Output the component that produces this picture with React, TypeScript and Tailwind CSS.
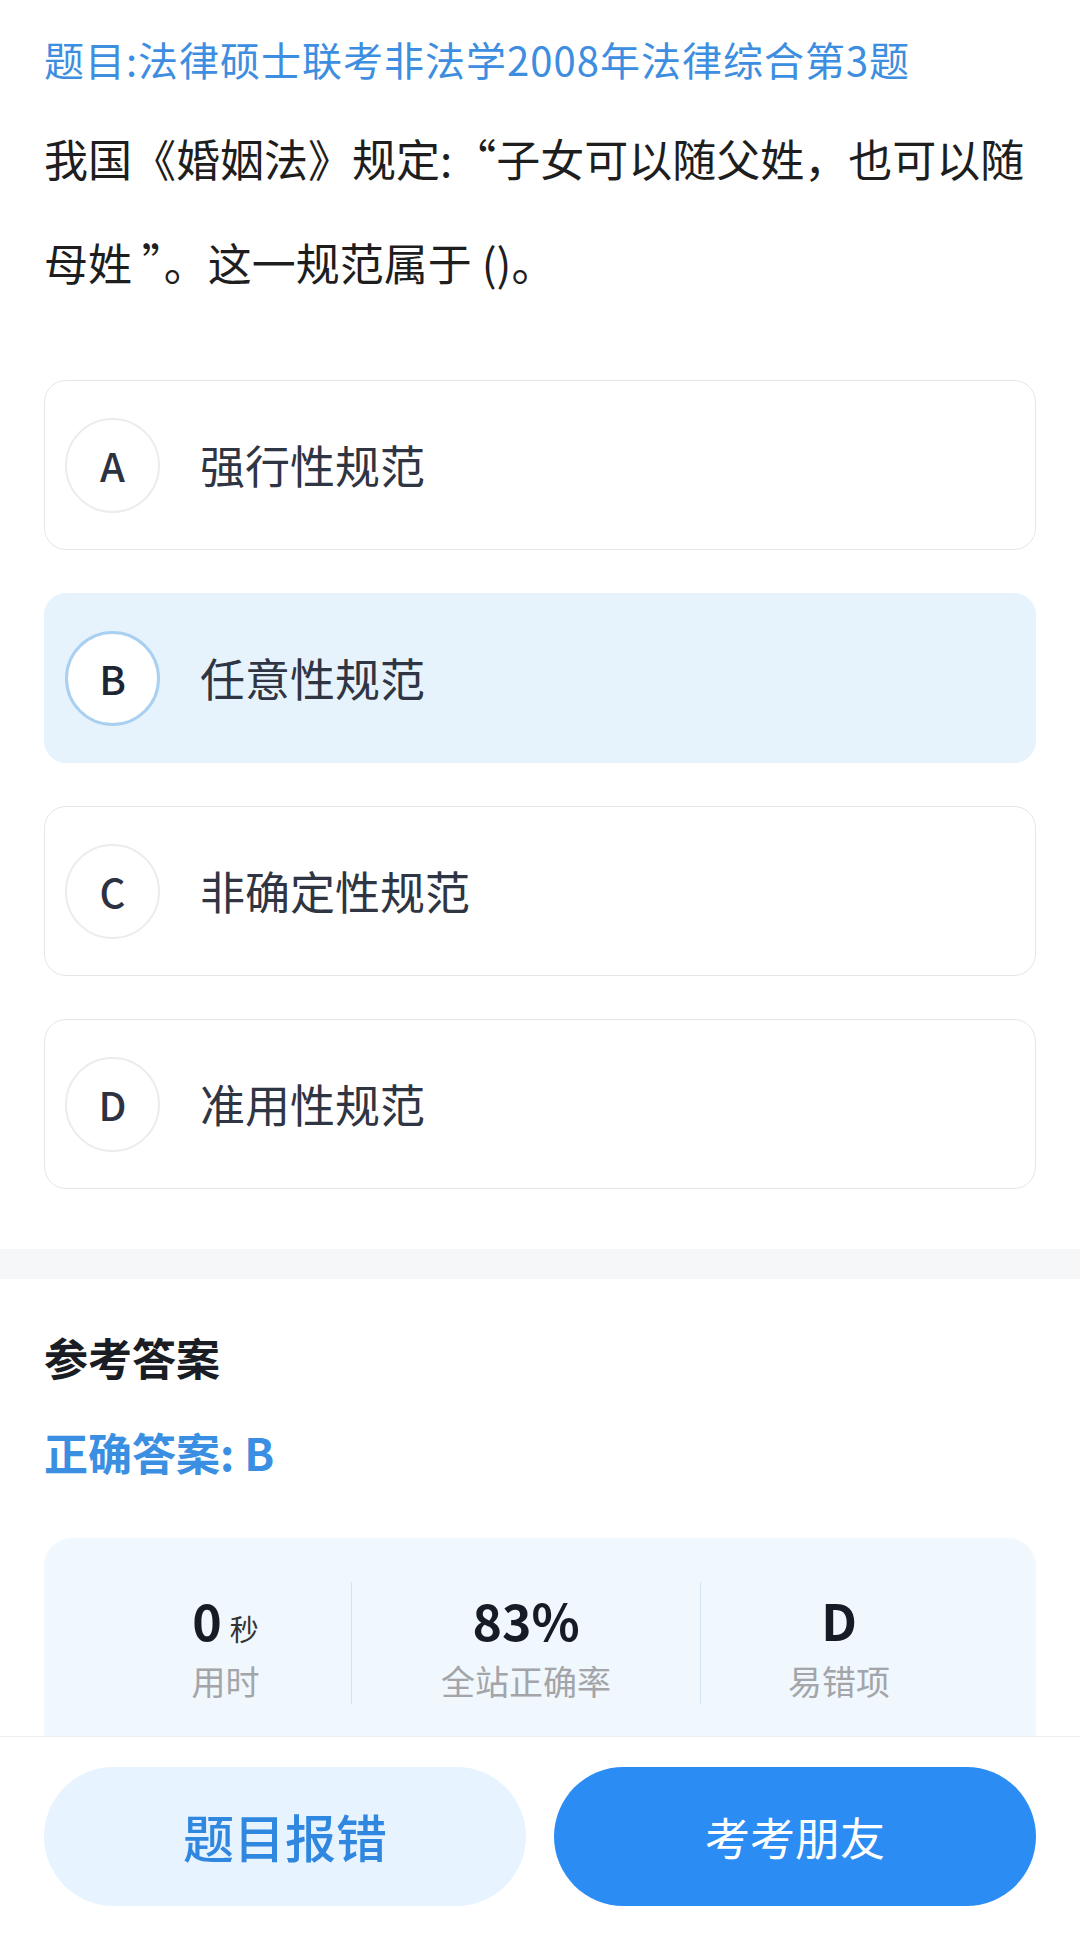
import React from "react";

// 选项数据
interface OptionItem {
  key: string;
  label: string;
  selected?: boolean;
}

const options: OptionItem[] = [
  { key: "A", label: "强行性规范" },
  { key: "B", label: "任意性规范", selected: true },
  { key: "C", label: "非确定性规范" },
  { key: "D", label: "准用性规范" },
];

interface StatItem {
  value: string;
  unit?: string;
  label: string;
  width: string;
}

function OptionRow({ item }: { item: OptionItem }) {
  return (
    <div
      className={
        item.selected
          ? "flex h-[170px] items-center rounded-[22px] border border-[#e6f3fd] bg-[#e6f3fd] pl-[20px]"
          : "flex h-[170px] items-center rounded-[22px] border border-[#e4e6ea] bg-white pl-[20px]"
      }
    >
      <div
        className={
          item.selected
            ? "flex h-[95px] w-[95px] items-center justify-center rounded-full border-[3px] border-[#a9d0f0] bg-white text-[40px] font-medium text-[#1d2433]"
            : "flex h-[95px] w-[95px] items-center justify-center rounded-full border-2 border-[#ebecef] bg-white text-[40px] font-medium text-[#2c3242]"
        }
      >
        {item.key}
      </div>
      <span className="ml-[40px] text-[45px] leading-[60px] text-[#2f3542]">{item.label}</span>
    </div>
  );
}

export default function App() {
  const stats: StatItem[] = [
    { value: "0", unit: "秒", label: "用时", width: "w-[251px]" },
    { value: "83%", label: "全站正确率", width: "w-[348px]" },
    { value: "D", label: "易错项", width: "w-[276px]" },
  ];

  return (
    <div
      className="flex h-[1935px] w-[1080px] flex-col bg-white"
      style={{ fontFamily: '"Noto Sans CJK SC", "Noto Sans", sans-serif' }}
    >
      {/* 题目区域 */}
      <div className="h-[1736px] overflow-hidden">
        <div className="px-[44px]">
          <div className="pt-[31px] text-[40px] leading-[56px] tracking-[1px] text-[#3d8ee0]">
            题目:法律硕士联考非法学2008年法律综合第3题
          </div>
          <div className="mt-[19px] text-[44px] leading-[104px] text-[#1e1e1e]">
            <div className="whitespace-nowrap">我国《婚姻法》规定:“子女可以随父姓，也可以随</div>
            <div className="whitespace-nowrap">母姓 ”。这一规范属于 ()。</div>
          </div>

          <div className="mt-[66px] flex flex-col gap-[43px]">
            {options.map((item) => (
              <OptionRow key={item.key} item={item} />
            ))}
          </div>
        </div>

        {/* 分隔带 */}
        <div className="mt-[60px] h-[30px] bg-[#f5f7f9]" />

        {/* 参考答案 */}
        <div className="px-[44px]">
          <div className="pt-[48px] text-[44px] font-bold leading-[60px] text-[#1a1d24]">参考答案</div>
          <div className="mt-[35px] text-[44px] font-bold leading-[60px] text-[#3a8fe2]">正确答案: B</div>

          <div className="mt-[56px] h-[300px] rounded-[28px] bg-[#f0f7fd] pl-[56px] pt-[44px]">
            <div className="flex">
              {stats.map((s, i) => (
                <React.Fragment key={s.label}>
                  {i > 0 && <div className="h-[122px] w-px bg-[#d3e4f3]" />}
                  <div className={`${s.width} flex flex-col items-center`}>
                    <div className="mt-[7px] flex h-[60px] items-baseline leading-[60px]">
                      <span className="text-[50px] font-semibold text-[#161b26]">{s.value}</span>
                      {s.unit && <span className="ml-[8px] text-[29px] leading-[60px] text-[#333]">{s.unit}</span>}
                    </div>
                    <div className="mt-[8px] text-[34px] leading-[48px] text-[#a3a5a8]">{s.label}</div>
                  </div>
                </React.Fragment>
              ))}
            </div>
          </div>
        </div>
      </div>

      {/* 底部按钮栏 */}
      <div className="flex-1 border-t border-[#efefef] bg-white px-[44px] pt-[30px]">
        <div className="flex gap-[28px]">
          <button className="flex h-[139px] flex-1 items-center justify-center rounded-full bg-[#e7f3fe] text-[51px] font-medium text-[#2f87df]">
            题目报错
          </button>
          <button className="flex h-[139px] flex-1 items-center justify-center rounded-full bg-[#2b8df4] text-[45px] text-white">
            考考朋友
          </button>
        </div>
      </div>
    </div>
  );
}
